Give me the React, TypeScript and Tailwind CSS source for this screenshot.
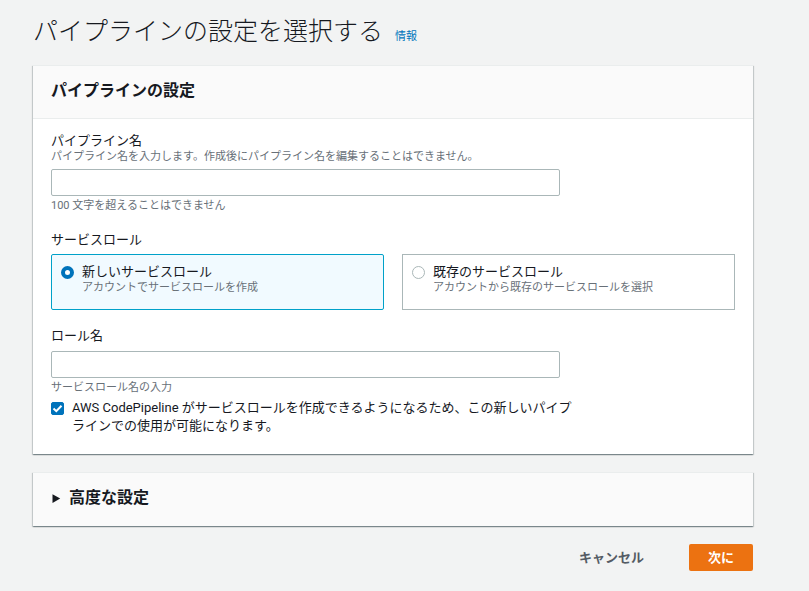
import { useState } from "react";

const roles = [
  {
    id: "new",
    name: "新しいサービスロール",
    description: "アカウントでサービスロールを作成",
  },
  {
    id: "existing",
    name: "既存のサービスロール",
    description: "アカウントから既存のサービスロールを選択",
  },
];

const card =
  "border-t border-[#eaeded] shadow-[0_1px_1px_0_rgba(0,28,36,0.3),1px_1px_1px_0_rgba(0,28,36,0.15),-1px_1px_1px_0_rgba(0,28,36,0.15)]";

const textInput =
  "h-[27px] w-full max-w-[509px] rounded-[2px] border border-[#aab7b8] bg-white px-2 outline-none focus:border-[#00a1c9]";

export default function App() {
  const [role, setRole] = useState("new");
  const [allow, setAllow] = useState(true);
  const [open, setOpen] = useState(false);

  return (
    <div className="min-h-screen bg-[#f2f3f3] pt-[14px] pr-14 pb-5 pl-[33px] font-[Roboto,'Noto_Sans_CJK_JP',sans-serif] text-[13px] leading-4 text-[#16191f]">
      <header className="flex items-baseline gap-3">
        <h1 className="text-[25px] leading-9 font-light">
          パイプラインの設定を選択する
        </h1>
        <a href="#info" className="text-[11px] text-[#0073bb]">
          情報
        </a>
      </header>

      <form onSubmit={(e) => e.preventDefault()}>
        <section className={`mt-[15px] bg-white ${card}`}>
          <h2 className="border-b border-[#eaeded] bg-[#fafafa] px-[18px] pt-[13px] pb-[15px] text-base leading-6 font-bold">
            パイプラインの設定
          </h2>

          <div className="flex flex-col gap-[18px] px-[18px] pt-[14px] pb-[19px]">
            <div>
              <label htmlFor="pipeline-name" className="block">
                パイプライン名
              </label>
              <p className="text-[11px] text-[#687078]">
                パイプライン名を入力します。作成後にパイプライン名を編集することはできません。
              </p>
              <input
                id="pipeline-name"
                type="text"
                maxLength={100}
                className={`mt-1 block ${textInput}`}
              />
              <p className="mt-[2px] text-[11px] text-[#687078]">
                100 文字を超えることはできません
              </p>
            </div>

            <fieldset>
              <legend>サービスロール</legend>
              <div className="mt-[6px] grid grid-cols-2 gap-[18px]">
                {roles.map((r) => (
                  <label
                    key={r.id}
                    className={`flex gap-2 border px-[9px] pt-[9px] pb-[13px] ${
                      role === r.id
                        ? "rounded-[2px] border-[#00a1c9] bg-[#f1faff]"
                        : "border-[#aab7b8] bg-white"
                    }`}
                  >
                    <input
                      type="radio"
                      name="role"
                      value={r.id}
                      checked={role === r.id}
                      onChange={() => setRole(r.id)}
                      className="mt-[2px] size-[13px] shrink-0 appearance-none rounded-full border border-[#aab7b8] bg-white checked:border-4 checked:border-[#0073bb]"
                    />
                    <span>
                      <span className="block">{r.name}</span>
                      <span className="block text-[11px] text-[#687078]">
                        {r.description}
                      </span>
                    </span>
                  </label>
                ))}
              </div>
            </fieldset>

            <div>
              <label htmlFor="role-name" className="block">
                ロール名
              </label>
              <input
                id="role-name"
                type="text"
                className={`mt-[7px] block ${textInput}`}
              />
              <p className="mt-[2px] text-[11px] text-[#687078]">
                サービスロール名の入力
              </p>
              <label className="mt-[3px] flex max-w-[524px] gap-2 leading-[18px]">
                <span className="mt-[3px] grid size-[13px] shrink-0">
                  <input
                    type="checkbox"
                    checked={allow}
                    onChange={(e) => setAllow(e.target.checked)}
                    className="col-start-1 row-start-1 size-[13px] appearance-none rounded-[2px] border border-[#aab7b8] bg-white checked:border-[#0073bb] checked:bg-[#0073bb]"
                  />
                  {allow && (
                    <svg
                      viewBox="0 0 13 13"
                      className="pointer-events-none col-start-1 row-start-1 size-[13px]"
                      fill="none"
                      stroke="#fff"
                      strokeWidth="2"
                    >
                      <path d="M2.5 6.5 5.3 9.2 10.5 3.7" />
                    </svg>
                  )}
                </span>
                <span>
                  AWS CodePipeline
                  がサービスロールを作成できるようになるため、この新しいパイプラインでの使用が可能になります。
                </span>
              </label>
            </div>
          </div>
        </section>

        <section className={`mt-[18px] bg-[#fafafa] ${card}`}>
          <h2 className="text-base leading-6 font-bold">
            <button
              type="button"
              aria-expanded={open}
              onClick={() => setOpen(!open)}
              className="flex w-full items-center gap-2 px-[18px] pt-[13px] pb-4 text-left"
            >
              <svg
                viewBox="0 0 10 10"
                className={open ? "size-[10px] rotate-90" : "size-[10px]"}
                fill="#16191f"
              >
                <path d="M1.5 1.2 9.2 5.6 1.5 10Z" />
              </svg>
              高度な設定
            </button>
          </h2>
        </section>

        <div className="mt-[18px] flex justify-end gap-[27px] leading-[27px] font-bold">
          <button type="button" className="px-[18px] text-[#545b64]">
            キャンセル
          </button>
          <button
            type="submit"
            className="rounded-[2px] bg-[#ec7211] px-[19px] text-white"
          >
            次に
          </button>
        </div>
      </form>
    </div>
  );
}
